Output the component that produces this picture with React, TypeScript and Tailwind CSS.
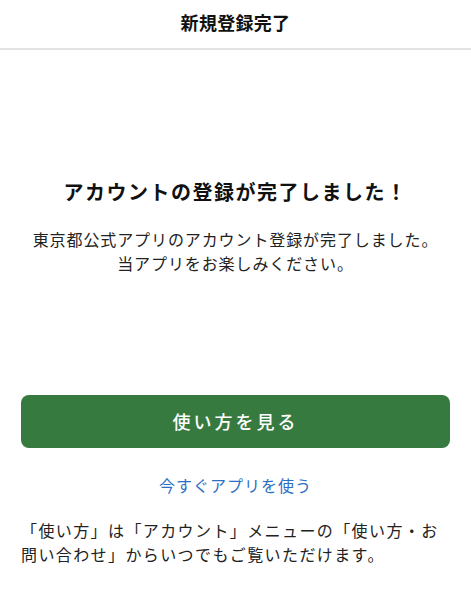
export default function App() {
  return (
    <div
      className="min-h-[600px] bg-white text-[#111]"
      style={{ fontFamily: '"Noto Sans CJK JP", "Noto Sans", sans-serif' }}
    >
      <header className="h-[50px] flex items-center justify-center border-b-2 border-[#e2e2e2]">
        <h1 className="text-[18px] font-bold leading-none mt-[-4px] tracking-[0.3px]">新規登録完了</h1>
      </header>

      <main className="px-[21px]">
        <section className="pt-[124px] text-center">
          <h2 className="text-[20px] font-bold leading-[36px] tracking-[1.5px]">
            アカウントの登録が完了しました！
          </h2>
          <p className="mt-[17px] text-[16px] leading-[24px] tracking-[0.9px] text-[#222]">
            東京都公式アプリのアカウント登録が完了しました。
            <br />
            当アプリをお楽しみください。
          </p>
        </section>

        <button className="mt-[120px] w-full h-[53px] rounded-[8px] bg-[#367a3f] text-white text-[18px] tracking-[3px] font-medium">
          使い方を見る
        </button>

        <div className="mt-[25px] text-center">
          <a className="text-[16px] tracking-[1px] text-[#2e6fc6]">今すぐアプリを使う</a>
        </div>

        <p className="mt-[21px] text-[16px] leading-[24px] tracking-[1.4px] text-[#222]">
          「使い方」は「アカウント」メニューの「使い方・お問い合わせ」からいつでもご覧いただけます。
        </p>
      </main>
    </div>
  );
}
